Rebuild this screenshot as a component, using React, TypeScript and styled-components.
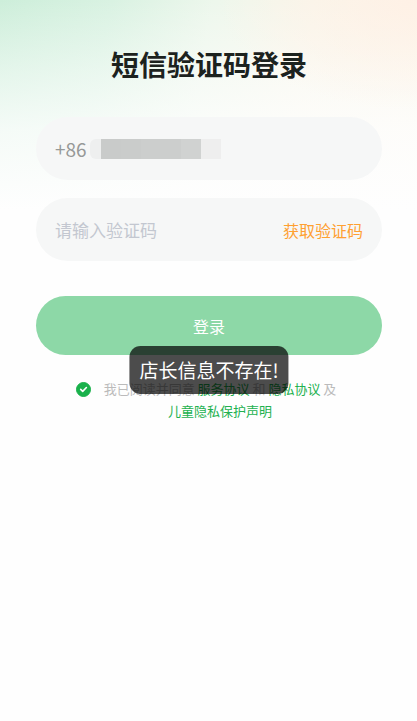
import React, { useState } from "react";
import styled, { createGlobalStyle } from "styled-components";

const GlobalStyle = createGlobalStyle`
  *, *::before, *::after { box-sizing: border-box; }
  body {
    margin: 0;
    background: #fefefe;
    font-family: "Noto Sans CJK SC", "Noto Sans", sans-serif;
  }
  button, input { font-family: inherit; }
`;

const Page = styled.main`
  min-height: 100vh;
  padding: 44px 35px 40px 36px;
  background:
    radial-gradient(ellipse 200px 110px at 100% 0, rgba(255, 240, 229, 0.9), rgba(255, 246, 240, 0) 100%) no-repeat,
    linear-gradient(to bottom, rgba(254, 254, 254, 0), rgba(254, 254, 254, 0.45) 70px, rgba(254, 254, 254, 0.8) 130px, #fefefe 210px) no-repeat,
    linear-gradient(100deg, #cdeeda 0, #d9f2e2 110px, #edf7ec 210px, #f8f7ec 310px, #fdf6ea 100%);
`;

const Title = styled.h1`
  margin: 0 0 33px;
  font-size: 28px;
  line-height: 40px;
  font-weight: 700;
  text-align: center;
  color: #1c221e;
`;

const Form = styled.form`
  display: flex;
  flex-direction: column;
`;

const Field = styled.div`
  display: flex;
  align-items: center;
  height: 63px;
  margin-bottom: 18px;
  padding: 0 19px;
  border-radius: 32px;
  background: #f6f7f7;
`;

const Prefix = styled.label`
  font-size: 19px;
  line-height: 28px;
  color: #979998;
`;

const Mask = styled.span`
  display: flex;
  height: 20px;
  margin-left: 3px;
  border-radius: 6px 0 0 6px;
  overflow: hidden;
`;

const MaskBlock = styled.span<{ $width: number; $color: string }>`
  width: ${(p) => p.$width}px;
  background: ${(p) => p.$color};
`;

const Input = styled.input`
  flex: 1;
  min-width: 0;
  padding: 0;
  border: 0;
  outline: 0;
  background: transparent;
  font-size: 17px;
  line-height: 28px;
  color: #333;
  &::placeholder { color: #c3c7d0; opacity: 1; }
`;

const CodeButton = styled.button`
  padding: 0;
  border: 0;
  background: none;
  font-size: 16px;
  line-height: 28px;
  color: #ffa031;
  cursor: pointer;
`;

const LoginArea = styled.div`
  position: relative;
  margin-top: 17px;
`;

const LoginButton = styled.button`
  display: block;
  width: 100%;
  height: 59px;
  border: 0;
  border-radius: 30px;
  background: #8dd8a7;
  font-size: 16px;
  color: #fff;
  cursor: pointer;
`;

const Toast = styled.div`
  position: absolute;
  top: 50px;
  left: 50%;
  transform: translateX(-50%);
  padding: 10px;
  border-radius: 11px;
  background: rgba(0, 0, 0, 0.7);
  font-size: 19px;
  line-height: 28px;
  white-space: nowrap;
  color: #fff;
`;

const Agreement = styled.div`
  display: flex;
  justify-content: center;
  gap: 13px;
  margin-top: 23px;
  padding-right: 6px;
`;

const Check = styled.span`
  display: grid;
  flex: none;
  width: 15px;
  height: 15px;
  margin-top: 4px;
  & > * { grid-area: 1 / 1; }
`;

const CheckInput = styled.input`
  appearance: none;
  width: 15px;
  height: 15px;
  margin: 0;
  border: 1px solid #19b14b;
  border-radius: 50%;
  cursor: pointer;
  &:checked { background: #19b14b; }
`;

const Tick = styled.svg`
  width: 15px;
  height: 15px;
  pointer-events: none;
`;

const Terms = styled.label`
  font-size: 13px;
  line-height: 22px;
  text-align: center;
  color: #bbb;
`;

const TermsLink = styled.a`
  color: #22b14f;
  text-decoration: none;
`;

const maskBlocks = [
  { width: 11, color: "#eeefef" },
  { width: 20, color: "#c9cbca" },
  { width: 20, color: "#cacccb" },
  { width: 40, color: "#cccecd" },
  { width: 20, color: "#d0d2d1" },
  { width: 20, color: "#eeeeee" },
];

export default function App() {
  const [agreed, setAgreed] = useState(true);
  const [code, setCode] = useState("");

  return (
    <>
      <GlobalStyle />
      <Page>
        <Title>短信验证码登录</Title>
        <Form onSubmit={(e) => e.preventDefault()}>
          <Field>
            <Prefix htmlFor="phone">+86</Prefix>
            <Mask aria-hidden="true">
              {maskBlocks.map((b, i) => (
                <MaskBlock key={i} $width={b.width} $color={b.color} />
              ))}
            </Mask>
            <Input id="phone" type="tel" />
          </Field>
          <Field>
            <Input
              id="code"
              aria-label="验证码"
              inputMode="numeric"
              placeholder="请输入验证码"
              value={code}
              onChange={(e) => setCode(e.target.value)}
            />
            <CodeButton type="button">获取验证码</CodeButton>
          </Field>
          <LoginArea>
            <LoginButton type="submit">登录</LoginButton>
            <Toast role="status">店长信息不存在!</Toast>
          </LoginArea>
          <Agreement>
            <Check>
              <CheckInput
                id="agree"
                type="checkbox"
                checked={agreed}
                onChange={(e) => setAgreed(e.target.checked)}
              />
              {agreed && (
                <Tick viewBox="0 0 15 15" aria-hidden="true">
                  <path
                    d="M4.7 7.4 6.7 9.4 10.4 5.5"
                    fill="none"
                    stroke="#fff"
                    strokeWidth="1.6"
                    strokeLinecap="round"
                    strokeLinejoin="round"
                  />
                </Tick>
              )}
            </Check>
            <Terms htmlFor="agree">
              我已阅读并同意 <TermsLink href="#service">服务协议</TermsLink> 和{" "}
              <TermsLink href="#privacy">隐私协议</TermsLink> 及<br />
              <TermsLink href="#children">儿童隐私保护声明</TermsLink>
            </Terms>
          </Agreement>
        </Form>
      </Page>
    </>
  );
}
